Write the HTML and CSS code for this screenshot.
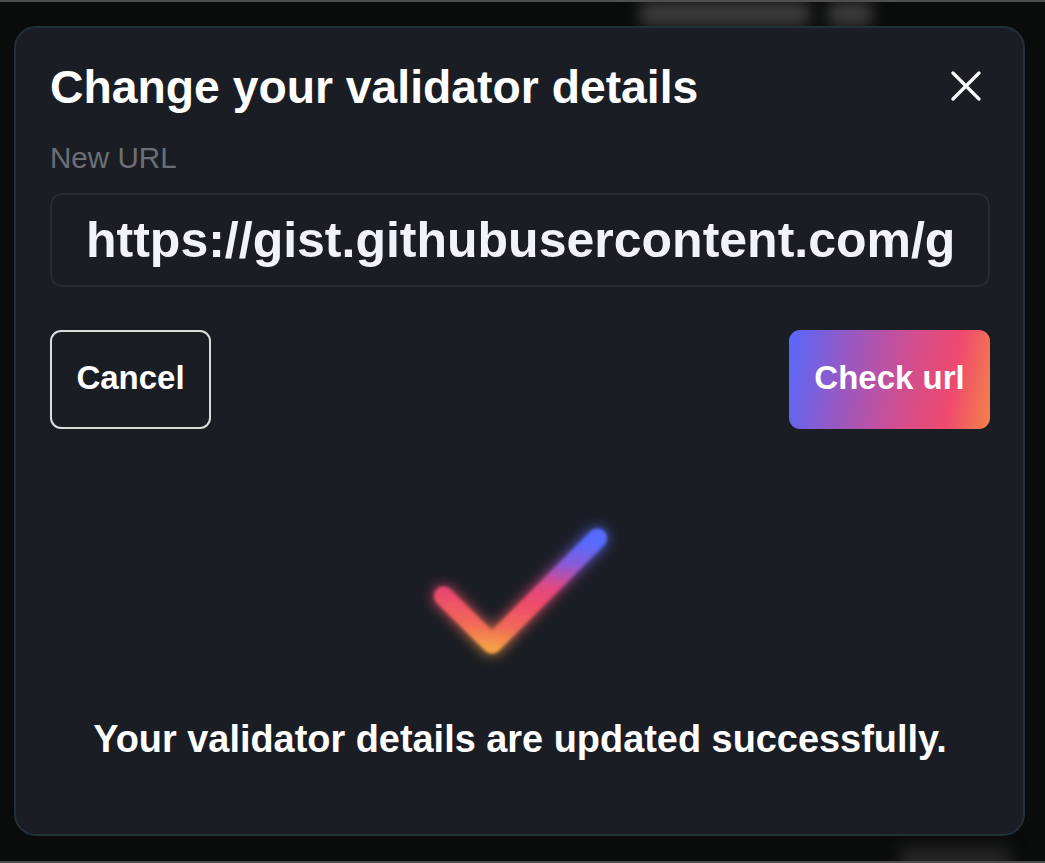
FILE: index.html
```html
<!DOCTYPE html>
<html lang="en">
<head>
<meta charset="utf-8">
<title>Change your validator details</title>
<link rel="stylesheet" href="styles.css">
</head>
<body>
<div class="backdrop">
  <div class="blur blur-a"></div>
  <div class="blur blur-b"></div>
  <div class="blur blur-c"></div>
  <div class="modal">
    <div class="modal-head">
      <h1 class="title">Change your validator details</h1>
      <button class="close" aria-label="Close">
        <svg width="30" height="30" viewBox="0 0 30 30"><path d="M2 2 L28 28 M28 2 L2 28" stroke="#ffffff" stroke-width="3.2" stroke-linecap="round" fill="none"/></svg>
      </button>
    </div>
    <label class="label">New URL</label>
    <div class="url-field"><span class="url-text">https://gist.githubusercontent.com/g</span></div>
    <div class="actions">
      <button class="btn btn-cancel">Cancel</button>
      <button class="btn btn-check">Check url</button>
    </div>
    <div class="check-wrap">
      <svg class="check" width="220" height="170" viewBox="0 0 220 170">
        <defs>
          <linearGradient id="cg" gradientUnits="userSpaceOnUse" x1="120" y1="30" x2="110" y2="142">
            <stop offset="0" stop-color="#5a6cff"/>
            <stop offset="0.2" stop-color="#8d5bd8"/>
            <stop offset="0.4" stop-color="#e04a86"/>
            <stop offset="0.55" stop-color="#f04a6e"/>
            <stop offset="0.8" stop-color="#f46a5a"/>
            <stop offset="1" stop-color="#f8a445"/>
          </linearGradient>
          <filter id="glow" x="-30%" y="-30%" width="160%" height="160%">
            <feGaussianBlur stdDeviation="7" result="g"/>
            <feMerge><feMergeNode in="g"/><feMergeNode in="SourceGraphic"/></feMerge>
          </filter>
          <filter id="soft" x="-30%" y="-30%" width="160%" height="160%">
            <feGaussianBlur stdDeviation="1.8"/>
          </filter>
        </defs>
        <g filter="url(#glow)">
          <polyline points="33.5,87 82,135 187.5,29" fill="none" stroke="url(#cg)" stroke-width="19" stroke-linecap="round" stroke-linejoin="round" filter="url(#soft)" opacity="0.95"/>
        </g>
      </svg>
    </div>
    <p class="message">Your validator details are updated successfully.</p>
  </div>
</div>
</body>
</html>
```
FILE: styles.css
```css
html, body {
  margin: 0;
  padding: 0;
  background: #0a0b0b;
}
body {
  font-family: "Liberation Sans", Arial, sans-serif;
  color: #ffffff;
}
.backdrop {
  position: relative;
  width: 1045px;
  height: 863px;
  box-sizing: border-box;
  border-top: 2px solid #4e4e4e;
  border-bottom: 2px solid #4e4e4e;
  padding: 24px 18px 0 14px;
  overflow: hidden;
}
.blur {
  position: absolute;
  background: #3e3e3e;
  filter: blur(8px);
  border-radius: 6px;
}
.blur-a { left: 640px; top: 0; width: 170px; height: 24px; }
.blur-b { left: 828px; top: 0; width: 44px; height: 24px; }
.blur-c { left: 900px; top: 845px; width: 110px; height: 30px; background: #262626; }
.modal {
  position: relative;
  width: 1011px;
  height: 810px;
  box-sizing: border-box;
  background: #1a1d24;
  border: 2px solid #22303a;
  border-radius: 22px;
  padding: 33px 33px 0 34px;
  display: flex;
  flex-direction: column;
}
.modal-head {
  display: flex;
  align-items: center;
  justify-content: space-between;
}
.title {
  margin: 0;
  font-size: 46.3px;
  font-weight: 700;
  line-height: 53px;
  letter-spacing: 0;
}
.close {
  background: none;
  border: 0;
  padding: 0;
  margin-right: 9px;
  margin-top: -3px;
  display: flex;
}
.label {
  margin-top: 27px;
  font-size: 29.6px;
  line-height: 33px;
  color: #6c6f76;
}
.url-field {
  margin-top: 19px;
  height: 94px;
  box-sizing: border-box;
  border: 2px solid #262a31;
  border-radius: 12px;
  padding: 0 34px;
  display: flex;
  align-items: center;
  overflow: hidden;
}
.url-text {
  font-size: 50px;
  font-weight: 700;
  color: #f1f3f8;
  white-space: nowrap;
  letter-spacing: 0;
}
.actions {
  margin-top: 43px;
  display: flex;
  justify-content: space-between;
}
.btn {
  font-family: "Liberation Sans", Arial, sans-serif;
  font-size: 33px;
  font-weight: 700;
  color: #ffffff;
  height: 99px;
  border-radius: 11px;
  cursor: pointer;
  padding: 0 0 4px;
}
.btn-cancel {
  width: 161px;
  background: transparent;
  border: 2px solid #dcdcdc;
}
.btn-check {
  width: 201px;
  border: 0;
  background: linear-gradient(100deg, #5668fb 0%, #9b58c0 30%, #d24d8e 58%, #f04a6e 80%, #f38349 100%);
}
.check-wrap {
  margin-top: 80px;
  display: flex;
  justify-content: center;
}
.check {
  display: block;
}
.message {
  margin: 38px 0 0;
  text-align: center;
  font-size: 37.9px;
  font-weight: 700;
  line-height: 44px;
}
```
